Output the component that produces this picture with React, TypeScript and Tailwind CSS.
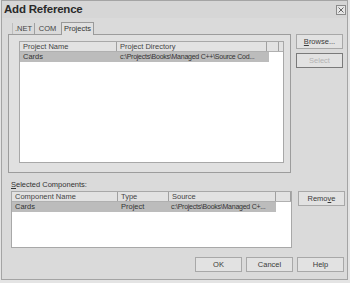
import React from 'react';

const font = { fontFamily: '"Liberation Sans", Arial, sans-serif' };

function Btn({ label, disabled, className = '' }: { label: React.ReactNode; disabled?: boolean; className?: string }) {
  return (
    <div
      className={`flex items-center justify-center h-[15px] w-[47px] border bg-[#e2e2e2] text-[7.5px] ${
        disabled ? 'border-[#7a7a7a] text-[#b4b4b4]' : 'border-[#a8a8a8] text-[#3a3a3a]'
      } ${className}`}
    >
      {label}
    </div>
  );
}

function HeaderCell({ label, w }: { label: string; w: string }) {
  return (
    <div className={`${w} h-full flex items-center pl-[3px] border-r border-[#a0a0a0] text-[7.5px] text-[#444] shrink-0 whitespace-nowrap overflow-hidden`}>
      {label}
    </div>
  );
}

export default function App() {
  return (
    <div className="w-[350px] h-[283px] bg-[#e4e4e4] pl-[1px]" style={font}>
      <div className="w-[347px] h-[280px] border border-[#a4a4a4] bg-[#dadada] flex flex-col">
        {/* title bar */}
        <div className="h-[17px] flex items-center justify-between pl-[2px] pr-[1px] bg-[#d6d6d6]">
          <span className="text-[11.5px] font-bold text-[#2a2a2a] tracking-[-0.2px]">Add Reference</span>
          <div className="w-[10px] h-[10px] border border-[#8a8a8a] bg-[#e6e6e6] flex items-center justify-center">
            <svg width="8" height="8" viewBox="0 0 8 8">
              <path d="M1.5 1.5 L6.5 6.5 M6.5 1.5 L1.5 6.5" stroke="#666" strokeWidth="1" />
            </svg>
          </div>
        </div>

        {/* top section */}
        <div className="flex mt-[3px] ml-[6px]">
          <div className="flex flex-col w-[283px]">
            <div className="flex items-end h-[13px] pl-[4px]">
              <div className="h-[11px] w-[22px] border-l border-[#bdbdbd] flex items-center justify-center text-[7.5px] text-[#444]">.NET</div>
              <div className="h-[11px] w-[26px] border-l border-[#a0a0a0] flex items-center justify-center text-[7.5px] text-[#444]">COM</div>
              <div className="h-[13px] w-[33px] ml-[1px] border-l border-t border-r border-[#9a9a9a] bg-[#e0e0e0] flex items-center justify-center text-[7.5px] text-[#333] -mb-[1px] relative z-10">
                Projects
              </div>
            </div>
            <div className="h-[139px] border border-[#9c9c9c] bg-[#e0e0e0] pl-[10px] pt-[6px]">
              <div className="w-[265px] h-[122px] border border-[#a8a8a8] bg-white flex flex-col">
                <div className="h-[10px] flex bg-[#e2e2e2] border-b border-[#b0b0b0]">
                  <HeaderCell label="Project Name" w="w-[97px]" />
                  <HeaderCell label="Project Directory" w="w-[150px]" />
                  <HeaderCell label="" w="w-[12px]" />
                </div>
                <div className="h-[10px] flex items-center bg-[#bcbcbc] w-[249px] text-[7.5px] text-[#333]">
                  <span className="w-[98px] pl-[3px]">Cards</span>
                  <span className="w-[151px] pl-[2px] whitespace-nowrap text-[7px] tracking-[-0.25px]">c:\Projects\Books\Managed C++\Source Cod...</span>
                </div>
              </div>
            </div>
          </div>
          <div className="flex flex-col ml-[5px] mt-[13px] gap-[4px]">
            <Btn label={<span><u>B</u>rowse...</span>} />
            <Btn label="Select" disabled className="border-[#6e6e6e]" />
          </div>
        </div>

        {/* selected components */}
        <div className="ml-[9px] mt-[6px] text-[7.5px] text-[#333] h-[11px]">
          <u>S</u>elected Components:
        </div>
        <div className="flex ml-[9px] mt-[1px]">
          <div className="w-[281px] h-[57px] border border-[#a8a8a8] bg-white flex flex-col">
            <div className="h-[10px] flex bg-[#e2e2e2] border-b border-[#b0b0b0]">
              <HeaderCell label="Component Name" w="w-[106px]" />
              <HeaderCell label="Type" w="w-[51px]" />
              <HeaderCell label="Source" w="w-[107px]" />
              <HeaderCell label="" w="w-[15px]" />
            </div>
            <div className="h-[10px] flex items-center bg-[#bcbcbc] w-[264px] text-[7.5px] text-[#333]">
              <span className="w-[106px] pl-[3px]">Cards</span>
              <span className="w-[51px] pl-[3px]">Project</span>
              <span className="w-[107px] pl-[2px] whitespace-nowrap text-[7px] tracking-[-0.25px]">c:\Projects\Books\Managed C+...</span>
            </div>
          </div>
          <Btn label={<span>Remo<u>v</u>e</span>} className="ml-[6px] w-[46px]" />
        </div>

        {/* bottom buttons */}
        <div className="flex justify-end gap-[4px] mt-[9px] pr-[3px]">
          <Btn label="OK" className="w-[46px]" />
          <Btn label="Cancel" className="w-[47px]" />
          <Btn label="Help" className="w-[46px]" />
        </div>
      </div>
    </div>
  );
}
